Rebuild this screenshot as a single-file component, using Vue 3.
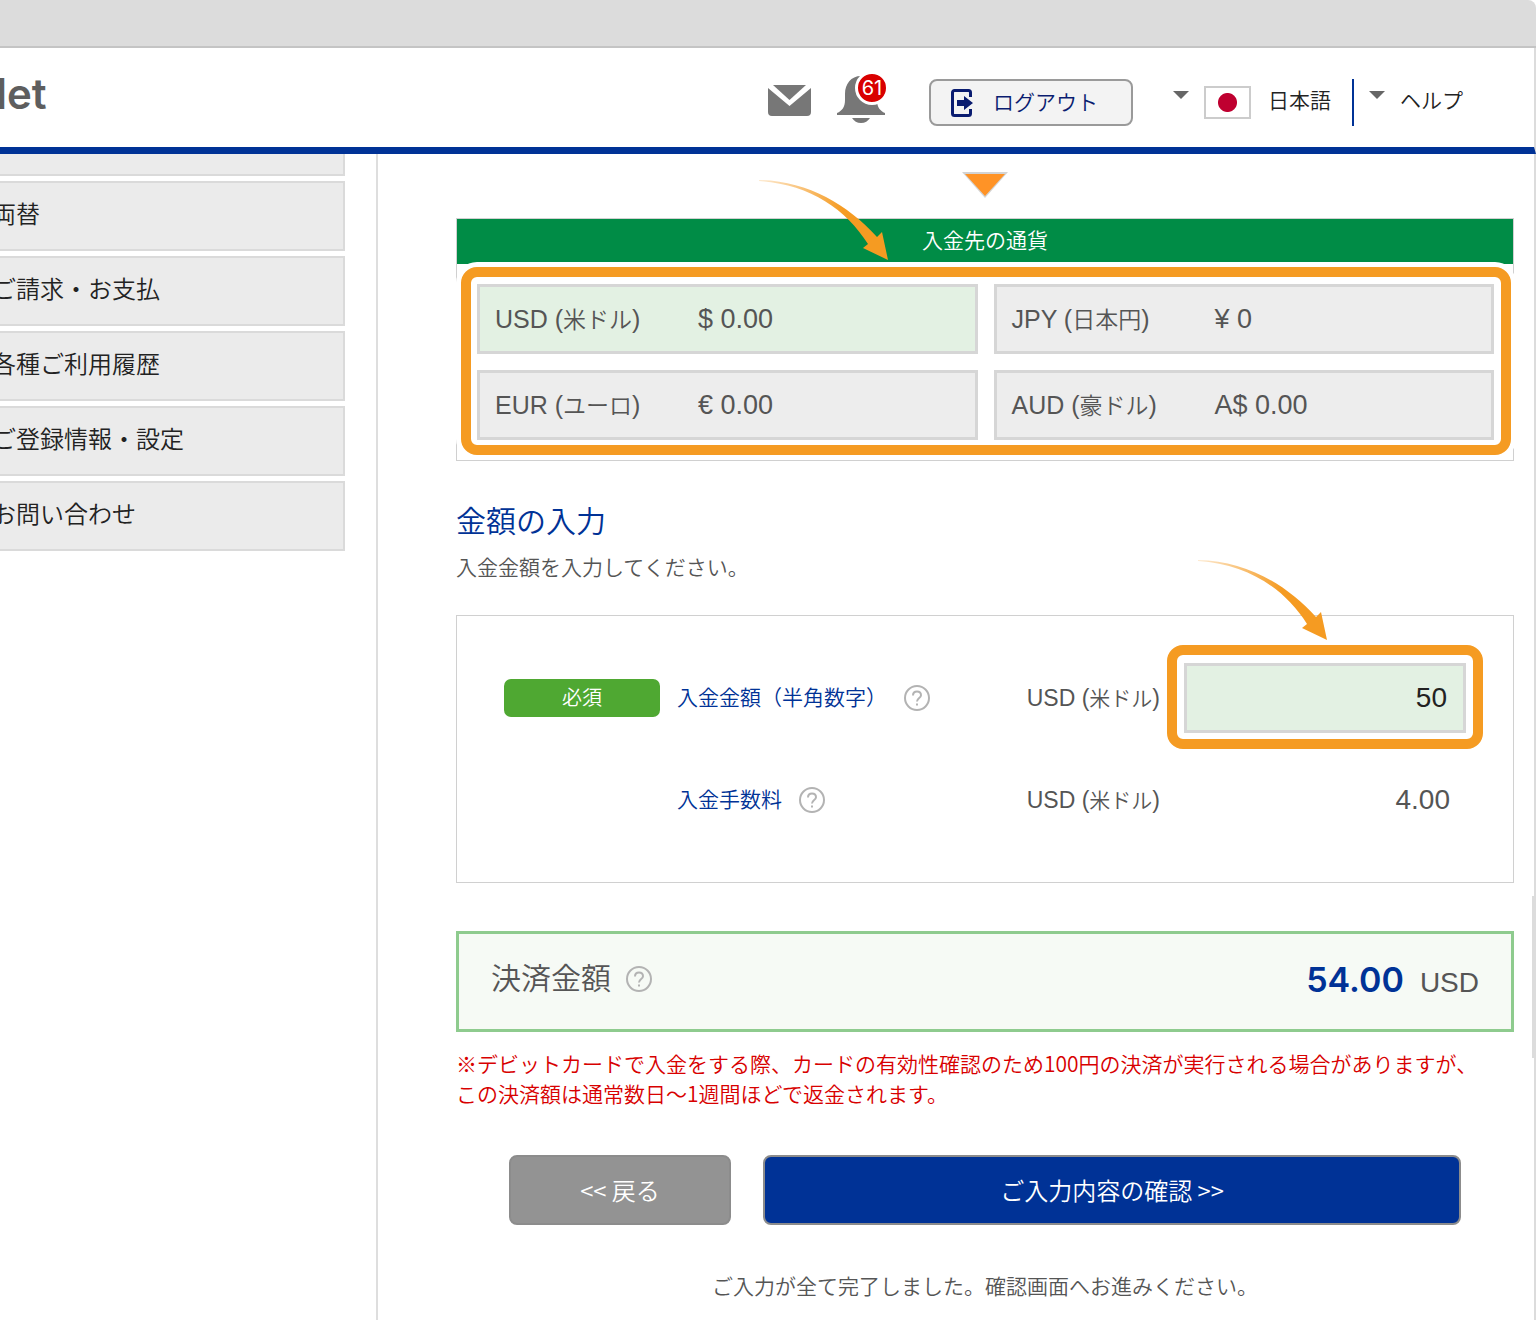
<script setup>
import { ref } from 'vue'

const menu = ['両替', 'ご請求・お支払', '各種ご利用履歴', 'ご登録情報・設定', 'お問い合わせ']

const currencies = [
  { code: 'USD', name: '米ドル', balance: '$ 0.00' },
  { code: 'JPY', name: '日本円', balance: '¥ 0' },
  { code: 'EUR', name: 'ユーロ', balance: '€ 0.00' },
  { code: 'AUD', name: '豪ドル', balance: 'A$ 0.00' }
]

const selected = ref('USD')
const amount = ref('50')
</script>

<template>
  <div class="page">
    <div class="chrome"></div>

    <header class="header">
      <div class="logo">let</div>
      <div class="tools">
        <button class="icon-button" type="button" aria-label="メッセージ">
          <svg width="43" height="31" viewBox="0 0 43 31">
            <path d="M5 0H38L21.500 15Z" fill="#777" />
            <path d="M0 3L21.500 21L43 3V27a4 4 0 0 1-4 4H4a4 4 0 0 1-4-4Z" fill="#777" />
          </svg>
        </button>
        <button class="icon-button bell" type="button" aria-label="お知らせ">
          <svg width="48" height="48" viewBox="0 0 48 48">
            <path d="M24 1C14 1 8 9 8 19V25C8 32 5 36 0 38V40H48V38C43 36 40 32 40 25V19C40 9 34 1 24 1Z" fill="#777" />
            <path d="M15 43H33C31 46 28 48 24 48S17 46 15 43Z" fill="#777" />
          </svg>
          <span class="count">61</span>
        </button>
        <button class="logout" type="button">
          <svg width="22" height="28" viewBox="0 0 22 28">
            <path d="M19.500 8V3.500a2 2 0 0 0-2-2H3.500a2 2 0 0 0-2 2v21a2 2 0 0 0 2 2h14a2 2 0 0 0 2-2V20" fill="none" stroke="#0a1c70" stroke-width="3" />
            <path d="M6 11H13V7L22 14L13 21V17H6Z" fill="#0a1c70" />
          </svg>
          <span>ログアウト</span>
        </button>
        <button class="drop lang" type="button">
          <span class="caret"></span>
          <span class="flag"></span>
          <span>日本語</span>
        </button>
        <button class="drop" type="button">
          <span class="caret"></span>
          <span>ヘルプ</span>
        </button>
      </div>
    </header>

    <div class="body">
      <nav class="side">
        <div class="item cut"></div>
        <a v-for="m in menu" :key="m" class="item" href="#">{{ m }}</a>
      </nav>

      <main class="main">
        <svg class="step" width="46" height="27" viewBox="0 0 46 27">
          <path d="M0 0H46L23 26Z" fill="#d3d3d3" />
          <path d="M3 2H43L23 24Z" fill="#ff9326" />
        </svg>

        <section class="currency">
          <h2 class="bar">入金先の通貨</h2>
          <div class="cells">
            <button
              v-for="c in currencies"
              :key="c.code"
              type="button"
              class="cell"
              :class="{ on: c.code === selected }"
              @click="selected = c.code"
            >
              <span class="name">{{ c.code }} (<span class="jp">{{ c.name }}</span>)</span>
              <span>{{ c.balance }}</span>
            </button>
          </div>
          <div class="ring ring-currency"></div>
          <svg class="arrow arrow-currency" width="130" height="80" viewBox="0 0 130 80">
            <defs>
              <linearGradient id="fade-a" x1="0" y1="0" x2="1" y2="0">
                <stop offset="0" stop-color="#f59b22" stop-opacity="0.2" />
                <stop offset="0.65" stop-color="#f59b22" />
              </linearGradient>
            </defs>
            <path d="M0 0C48 1 88 24 118 57L123 52L129 80L104 68L109 64C87 29 50 4 0 1Z" fill="url(#fade-a)" />
          </svg>
        </section>

        <h1 class="title">金額の入力</h1>
        <p class="lead">入金金額を入力してください。</p>

        <section class="form">
          <div class="row">
            <span class="badge">必須</span>
            <div class="label">
              <label for="amount">入金金額（半角数字）</label>
              <svg class="help" width="26" height="26" viewBox="0 0 26 26">
                <circle cx="13" cy="13" r="12" />
                <path d="M9 10.500C9 8 10.500 6.500 13 6.500S17 8 17 10.200C17 13 13 13 13 16.500M13 18.500V20.500" />
              </svg>
            </div>
            <span class="unit">USD (<span class="jp">米ドル</span>)</span>
            <div class="field">
              <input id="amount" v-model="amount" type="text" inputmode="numeric" />
              <div class="ring ring-field"></div>
              <svg class="arrow arrow-field" width="130" height="80" viewBox="0 0 130 80">
                <defs>
                  <linearGradient id="fade-b" x1="0" y1="0" x2="1" y2="0">
                    <stop offset="0" stop-color="#f59b22" stop-opacity="0.2" />
                    <stop offset="0.65" stop-color="#f59b22" />
                  </linearGradient>
                </defs>
                <path d="M0 0C48 1 88 24 118 57L123 52L129 80L104 68L109 64C87 29 50 4 0 1Z" fill="url(#fade-b)" />
              </svg>
            </div>
          </div>
          <div class="row fee">
            <span></span>
            <div class="label">
              <span>入金手数料</span>
              <svg class="help" width="26" height="26" viewBox="0 0 26 26">
                <circle cx="13" cy="13" r="12" />
                <path d="M9 10.500C9 8 10.500 6.500 13 6.500S17 8 17 10.200C17 13 13 13 13 16.500M13 18.500V20.500" />
              </svg>
            </div>
            <span class="unit">USD (<span class="jp">米ドル</span>)</span>
            <span class="value">4.00</span>
          </div>
        </section>

        <section class="total">
          <div class="total-label">
            <span>決済金額</span>
            <svg class="help" width="26" height="26" viewBox="0 0 26 26">
              <circle cx="13" cy="13" r="12" />
              <path d="M9 10.500C9 8 10.500 6.500 13 6.500S17 8 17 10.200C17 13 13 13 13 16.500M13 18.500V20.500" />
            </svg>
          </div>
          <div class="sum"><strong>54.00</strong><span>USD</span></div>
        </section>

        <p class="note">※デビットカードで入金をする際、カードの有効性確認のため100円の決済が実行される場合がありますが、<br />この決済額は通常数日〜1週間ほどで返金されます。</p>

        <div class="actions">
          <button class="back" type="button">&lt;&lt; 戻る</button>
          <button class="next" type="button">ご入力内容の確認 &gt;&gt;</button>
        </div>
        <p class="done">ご入力が全て完了しました。確認画面へお進みください。</p>
      </main>
    </div>
    <div class="thumb"></div>
  </div>
</template>

<style>
body {
  background: #fff;
}
</style>

<style scoped>
.page,
.page * {
  box-sizing: border-box;
}
.page {
  position: relative;
  display: flex;
  flex-direction: column;
  min-height: 100vh;
  font-family: "Liberation Sans", "Noto Sans CJK JP", sans-serif;
  font-weight: 350;
  font-size: 21px;
  line-height: 30px;
  color: #555;
  background: #fff;
  overflow: hidden;
}
button,
input {
  font: inherit;
  color: inherit;
  margin: 0;
  cursor: pointer;
}
h1,
h2,
p {
  margin: 0;
  font-weight: 350;
}
.chrome {
  height: 48px;
  background: #dcdcdc;
  border-bottom: 2px solid #c4c4c4;
  border-top-right-radius: 8px;
}
.header {
  display: flex;
  align-items: center;
  justify-content: space-between;
  height: 106px;
  padding-right: 71px;
  border-bottom: 7px solid #003296;
  border-right: 2px solid #dcdcdc;
}
.logo {
  margin-left: -4px;
  padding-bottom: 8px;
  font-family: Inter, sans-serif;
  font-weight: 600;
  font-size: 42px;
  line-height: 48px;
  color: #5e5e5e;
}
.tools {
  display: flex;
  align-items: center;
  padding-top: 10px;
  color: #222;
}
.icon-button {
  position: relative;
  display: flex;
  padding: 0 0 5px;
  border: 0;
  background: none;
}
.bell {
  margin: 0 44px 0 26px;
  padding-bottom: 8px;
}
.count {
  position: absolute;
  top: -4px;
  right: -4px;
  width: 34px;
  height: 34px;
  border: 3px solid #fff;
  border-radius: 50%;
  background: #d90000;
  color: #fff;
  font-family: Inter, sans-serif;
  font-weight: 400;
  font-size: 20px;
  line-height: 28px;
  text-align: center;
}
.logout {
  display: flex;
  align-items: center;
  gap: 20px;
  height: 47px;
  padding: 0 33px 0 20px;
  border: 2px solid #9a9a9a;
  border-radius: 8px;
  background: #f3f3f3;
  color: #0a1c70;
}
.drop {
  display: flex;
  align-items: center;
  gap: 15px;
  height: 47px;
  padding: 0 0 4px 15px;
  border: 0;
  background: none;
}
.lang {
  margin-left: 40px;
  padding: 0 21px 4px 0;
  border-right: 2px solid #003296;
}
.caret {
  margin-bottom: 12px;
  border: 8px solid transparent;
  border-top-color: #666;
  border-bottom: 0;
}
.flag {
  width: 47px;
  height: 33px;
  margin: 4px 2px 0 0;
  border: 2px solid #ccc;
  background: radial-gradient(circle, #bf0030 9px, #fff 10px);
}
.body {
  display: flex;
  flex: 1;
  border-right: 2px solid #dcdcdc;
}
.side {
  display: flex;
  flex-direction: column;
  gap: 5px;
  width: 378px;
  padding-right: 31px;
  border-right: 2px solid #dedede;
}
.item {
  display: flex;
  align-items: center;
  height: 70px;
  padding-bottom: 2px;
  border: 2px solid #dadada;
  border-left: 0;
  background: #ebebeb;
  color: #222;
  font-size: 24px;
  text-decoration: none;
  text-indent: -8px;
  white-space: nowrap;
}
.cut {
  height: 22px;
  border-top: 0;
}
.main {
  flex: 1;
  min-width: 0;
  padding: 18px 20px 16px 78px;
}
.step {
  display: block;
  margin: 0 auto 19px;
}
.currency {
  position: relative;
  border: 1px solid #d0d0d0;
}
.bar {
  height: 45px;
  background: #008c46;
  color: #fff;
  font-size: 21px;
  line-height: 44px;
  text-align: center;
}
.cells {
  display: grid;
  grid-template-columns: 1fr 1fr;
  gap: 16px;
  padding: 20px 19px 20px 20px;
}
.cell {
  display: flex;
  align-items: center;
  height: 70px;
  padding: 0 15px;
  border: 3px solid #d6d6d6;
  background: #ededed;
  font-size: 27px;
  text-align: left;
}
.cell.on {
  background: #e3f1e3;
}
.name {
  width: 203px;
  font-size: 25px;
}
.name .jp {
  font-size: 23px;
}
.ring {
  position: absolute;
  border: 10px solid #f59b22;
  border-radius: 16px;
  pointer-events: none;
}
.ring-currency {
  inset: 48px 2px 5px 4px;
  box-shadow: 0 0 0 5px #fff;
}
.ring-field {
  inset: -18px -17px -16px -17px;
}
.arrow {
  position: absolute;
  pointer-events: none;
}
.arrow-currency {
  top: -39px;
  left: 302px;
}
.arrow-field {
  top: -103px;
  left: 14px;
}
.title {
  margin-top: 39px;
  font-size: 30px;
  line-height: 44px;
  color: #003296;
}
.lead {
  margin-top: 9px;
}
.form {
  margin-top: 32px;
  padding: 47px;
  border: 1px solid #d0d0d0;
}
.row {
  display: grid;
  grid-template-columns: 156px 1fr auto 282px;
  align-items: center;
  column-gap: 17px;
}
.badge {
  border-radius: 7px;
  background: #4fa832;
  color: #fff;
  font-size: 20px;
  line-height: 38px;
  text-align: center;
}
.label {
  display: flex;
  align-items: center;
  gap: 17px;
  color: #003296;
}
.help {
  flex: none;
  fill: none;
  stroke: #b3b3b3;
  stroke-width: 2;
}
.unit {
  padding-right: 7px;
  font-size: 23px;
}
.unit .jp {
  font-size: 21px;
}
.field {
  position: relative;
}
.field input {
  display: block;
  width: 100%;
  height: 70px;
  padding: 0 16px;
  border: 3px solid #d6d6d6;
  border-radius: 0;
  background: #e3f1e3;
  color: #222;
  font-size: 28px;
  text-align: right;
}
.fee {
  height: 70px;
  margin-top: 32px;
}
.value {
  padding-right: 16px;
  font-size: 28px;
  text-align: right;
}
.total {
  display: flex;
  align-items: center;
  justify-content: space-between;
  height: 101px;
  margin-top: 48px;
  padding: 0 32px;
  border: 3px solid #8ecb8e;
  background: #f6faf5;
}
.total-label {
  display: flex;
  align-items: center;
  gap: 15px;
  padding-bottom: 6px;
  font-size: 30px;
}
.sum {
  display: flex;
  align-items: baseline;
  gap: 16px;
  font-size: 28px;
}
.sum strong {
  color: #003296;
  font-family: Inter, sans-serif;
  font-size: 34px;
  font-weight: 600;
}
.note {
  margin-top: 16px;
  font-family: "Noto Sans CJK JP", sans-serif;
  color: #d80000;
}
.actions {
  display: flex;
  gap: 32px;
  margin-top: 47px;
  padding: 0 53px;
}
.actions button {
  height: 70px;
  border: 2px solid #8c8c8c;
  border-radius: 8px;
  color: #fff;
  font-family: "Noto Sans CJK JP", sans-serif;
  font-size: 24px;
}
.actions .back {
  width: 222px;
  background: #939393;
}
.actions .next {
  flex: 1;
  background: #003296;
}
.done {
  margin-top: 47px;
  text-align: center;
}
.thumb {
  position: absolute;
  top: 896px;
  right: 0;
  width: 4px;
  height: 162px;
  background: #dcdcdc;
}
</style>
